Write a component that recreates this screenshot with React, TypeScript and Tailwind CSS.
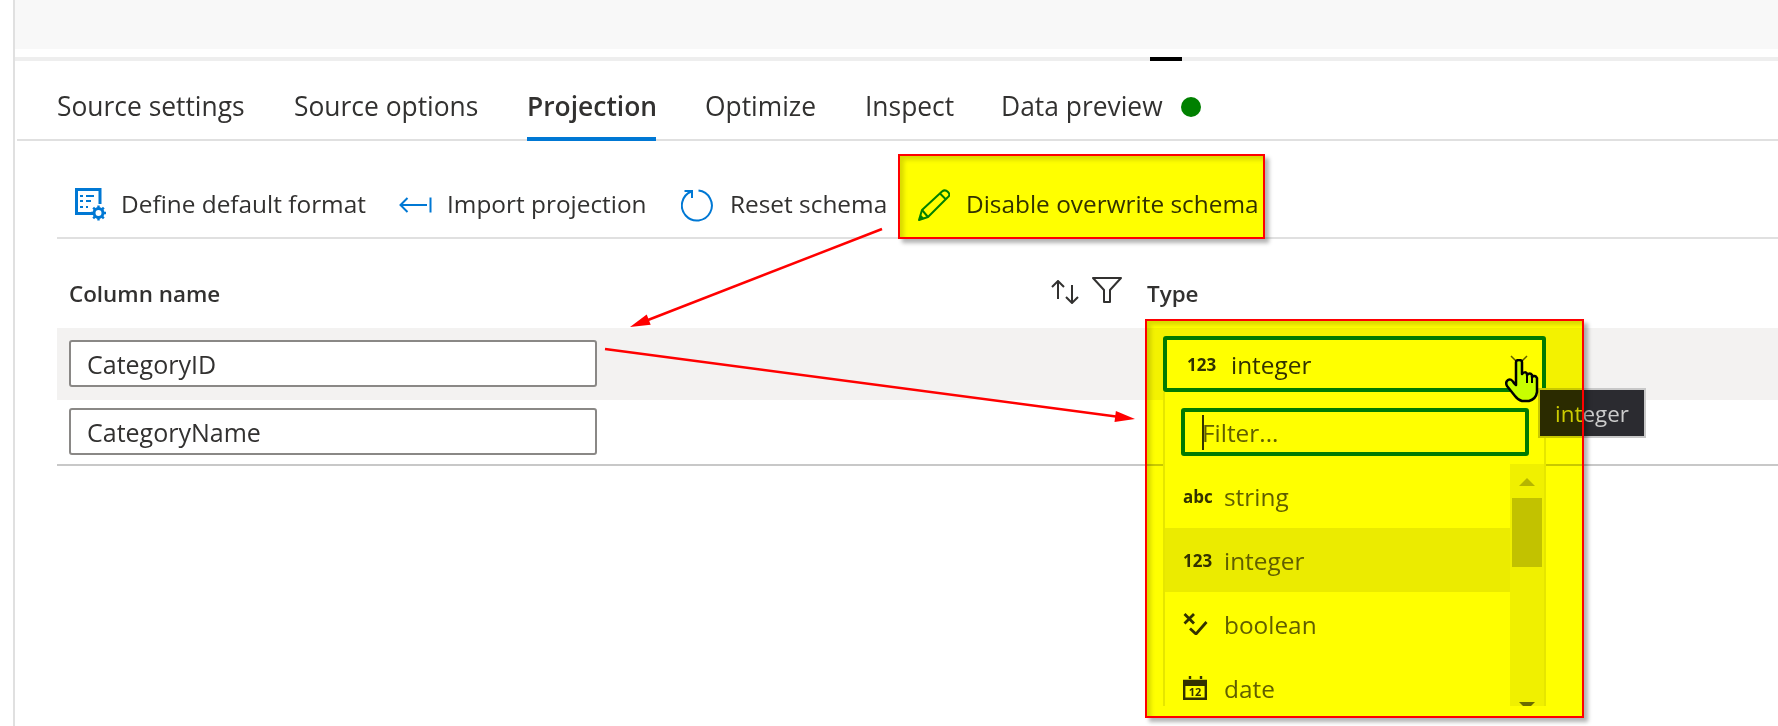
import React from 'react';

const DocGearIcon = () => (
  <svg width="32" height="34" viewBox="0 0 32 34" fill="none" className="shrink-0">
    <path d="M18 25.5H1.5V1.5H25V16" stroke="#0078d4" strokeWidth="3" />
    <path d="M5 8h3M11 8h8M5 13h3M11 13h5M5 19h3M11 19h2" stroke="#0078d4" strokeWidth="2" />
    <circle cx="23.5" cy="25" r="4.5" stroke="#0078d4" strokeWidth="3" />
    <path d="M23.5 17.5v3M23.5 29.5v3M16 25h3M28 25h3M18.2 19.7l2.1 2.1M26.7 28.2l2.1 2.1M18.2 30.3l2.1-2.1M26.7 21.8l2.1-2.1" stroke="#0078d4" strokeWidth="2.4" />
  </svg>
);

const ImportIcon = () => (
  <svg width="33" height="18" viewBox="0 0 33 18" fill="none" className="shrink-0">
    <path d="M1 9h27M8.500 2 1.500 9l7 7M31.500 1.500v15" stroke="#0078d4" strokeWidth="2" />
  </svg>
);

const ResetIcon = () => (
  <svg width="32" height="33" viewBox="0 0 32 33" fill="none" className="shrink-0">
    <path d="M17.500 1.600A15 15 0 1 1 10.500 2.500" stroke="#0078d4" strokeWidth="2" />
    <path d="M3.500 2H11V9" stroke="#0078d4" strokeWidth="2" />
  </svg>
);

const PencilIcon = () => (
  <svg width="32" height="32" viewBox="0 0 32 32" fill="none" className="shrink-0">
    <path d="M1 31 4 21 24 2.5Q27 0 30 3T29.500 8.500L10 28Z" stroke="#008000" strokeWidth="2" strokeLinejoin="round" />
    <path d="M4 21 10 28M22 4.500 28 10.500" stroke="#008000" strokeWidth="2" />
    <path d="M1 31 2.500 25.500 6.500 29.500Z" fill="#008000" />
  </svg>
);

const BooleanIcon = () => (
  <svg width="25" height="22" viewBox="0 0 25 22" fill="none" className="shrink-0">
    <path d="M1.500 1l9.500 9.500M11 1l-9.500 9.500" stroke="#323130" strokeWidth="2.800" />
    <path d="M7 15.500l6 5.500L23.500 9" stroke="#323130" strokeWidth="2.800" />
  </svg>
);

const DateIcon = () => (
  <svg width="24" height="24" viewBox="0 0 24 24" fill="none" className="shrink-0">
    <path d="M1.200 5h21.600v17.800H1.200z" stroke="#323130" strokeWidth="2.400" />
    <path d="M0 4h24v6H0z" fill="#323130" />
    <path d="M7 0v3M18 0v3" stroke="#323130" strokeWidth="2.400" />
    <text x="12" y="20" textAnchor="middle" fontSize="11" fontWeight="700" fill="#323130">12</text>
  </svg>
);

const HandCursor = () => (
  <svg width="34" height="44" viewBox="0 0 34 44" className="absolute left-[1505px] top-[359px]">
    <path
      d="M11 3Q11 1 14 1T17 3V15Q20 12 22 14.500V16Q25 13 27 16V18Q30 15.500 32 19V33Q31 40 24 42H17Q13 41 10 37L2 27Q0 23 3 21T9 24L11 26Z"
      fill="#c8ff00"
      stroke="#000"
      strokeWidth="2.500"
      strokeLinejoin="round"
    />
    <path d="M22 16v8M27 18v6" stroke="#000" strokeWidth="2" />
  </svg>
);

const Arrows = () => (
  <svg width="1778" height="726" viewBox="0 0 1778 726" fill="none" className="absolute left-0 top-0 pointer-events-none">
    <path d="M882 229 648 320" stroke="#f00" strokeWidth="2.500" />
    <path d="M630 327 650.700 324.800 646.700 314.600Z" fill="#f00" />
    <path d="M605 349 1116 416.500" stroke="#f00" strokeWidth="2.500" />
    <path d="M1135 419 1114.500 421.900 1115.900 410.900Z" fill="#f00" />
  </svg>
);

const tabs = [
  { label: 'Source settings', width: 'w-[188px]' },
  { label: 'Source options', width: 'w-[184px]' },
  { label: 'Projection', width: 'w-[129px]', active: true },
  { label: 'Optimize', width: 'w-[111px]' },
  { label: 'Inspect', width: 'w-[87px]' },
];

const ListRow: React.FC<{ icon: React.ReactNode; label: string; active?: boolean }> = ({ icon, label, active }) => (
  <div className={`h-16 shrink-0 flex items-center pl-[18px] ${active ? 'bg-[#ebebeb]' : ''}`}>
    <div className="w-[41px] flex">{icon}</div>
    <span className="mt-[2px] text-[#605e5c]">{label}</span>
  </div>
);

const TypeGlyph: React.FC<{ text: string }> = ({ text }) => (
  <span className="text-[17px] font-bold leading-none text-[#323130]">{text}</span>
);

export default function App() {
  return (
    <div className="relative w-[1778px] h-[726px] overflow-hidden bg-white text-[24.4px] text-[#323130] [font-family:'Open_Sans',sans-serif] pl-[13px]">
      <div className="h-full border-l-2 border-[#e0e0e0] flex flex-col">
        <div className="h-[49px] bg-[#f8f8f8]"></div>
        <div className="h-1 mt-2 bg-[#eeeeee]">
          <div className="h-1 w-8 ml-[1135px] bg-black"></div>
        </div>

        {/* Tabs */}
        <div className="h-[80px] ml-[2px] pl-[40px] border-b-2 border-[#e0e0e0] flex gap-[49px] text-[26.4px]">
          {tabs.map((t) => (
            <div key={t.label} className={`${t.width} h-[80px] shrink-0 pt-[26px] whitespace-nowrap ${t.active ? 'font-semibold border-b-4 border-[#0078d4]' : ''}`}>
              {t.label}
            </div>
          ))}
          <div className="h-[78px] pt-[26px] flex gap-[20px]">
            <span className="w-[160px] whitespace-nowrap">Data preview</span>
            <span className="w-5 h-5 mt-[10px] rounded-full bg-[#008000]"></span>
          </div>
        </div>

        {/* Toolbar */}
        <div className="ml-[42px] pl-[18px] pt-[32px] h-[98px] border-b-2 border-[#e0e0e0] flex items-center">
          <DocGearIcon />
          <span className="ml-[14px] w-[245px] -mt-[1px] whitespace-nowrap">Define default format</span>
          <span className="ml-[33px]"><ImportIcon /></span>
          <span className="ml-[15px] w-[200px] -mt-[1px] whitespace-nowrap">Import projection</span>
          <span className="ml-[34px]"><ResetIcon /></span>
          <span className="ml-[17px] w-[154px] -mt-[1px] whitespace-nowrap">Reset schema</span>
          <span className="ml-[34px]"><PencilIcon /></span>
          <span className="ml-[16px] -mt-[1px] whitespace-nowrap">Disable overwrite schema</span>
        </div>

        {/* Table */}
        <div className="ml-[42px]">
          <div className="h-[89px] pl-3 pt-[38px] flex items-start font-semibold text-[22.4px]">
            <span className="w-[982px]">Column name</span>
            <svg width="28" height="24" viewBox="0 0 28 24" fill="none" className="mt-[3px]">
              <path d="M7 19V1M1 7l6-6 6 6M21 5v18M15 17l6 6 6-6" stroke="#323130" strokeWidth="2" />
            </svg>
            <svg width="30" height="26" viewBox="0 0 30 26" fill="none" className="ml-[13px]">
              <path d="M1 1h28L18 13v12h-6V13Z" stroke="#323130" strokeWidth="2" strokeLinejoin="round" />
            </svg>
            <span className="ml-[25px]">Type</span>
          </div>
          <div className="h-[72px] bg-[#f3f2f1] pl-3 pt-3">
            <input readOnly value="CategoryID" className="w-[528px] h-[47px] bg-white border-2 border-[#8a8886] rounded-[3px] pl-4 text-[25px] outline-none" />
          </div>
          <div className="h-[66px] border-b-2 border-[#c8c8c8] pl-3 pt-2">
            <input readOnly value="CategoryName" className="w-[528px] h-[47px] bg-white border-2 border-[#8a8886] rounded-[3px] pl-4 text-[25px] outline-none" />
          </div>
        </div>
      </div>

      {/* Type dropdown, open */}
      <div className="absolute left-[1163px] top-[336px] w-[383px]">
        <div className="h-[56px] bg-white border-4 border-[#007a00] rounded-[3px] flex items-center pl-[20px] pr-[14px]">
          <span className="w-[44px] flex"><TypeGlyph text="123" /></span>
          <span className="mt-[2px]">integer</span>
          <svg width="18" height="10" viewBox="0 0 18 10" fill="none" className="ml-auto -mt-2">
            <path d="M1 1l8 8 8-8" stroke="#605e5c" strokeWidth="1.500" />
          </svg>
        </div>
        <div className="h-[314px] bg-white border-x-2 border-[#e6e6e6] overflow-hidden">
          <div className="h-[72px] pt-4 pl-4 pr-[15px]">
            <div className="h-[48px] border-4 border-[#007a00] rounded-[3px] flex items-center pl-[17px]">
              <span className="w-[2px] h-[35px] bg-[#323130]"></span>
              <span className="-ml-[2px] mt-[2px] text-[#605e5c]">Filter...</span>
            </div>
          </div>
          <div className="h-[242px] flex overflow-hidden">
            <div className="w-[345px] flex flex-col">
              <ListRow icon={<TypeGlyph text="abc" />} label="string" />
              <ListRow icon={<TypeGlyph text="123" />} label="integer" active />
              <ListRow icon={<BooleanIcon />} label="boolean" />
              <ListRow icon={<DateIcon />} label="date" />
            </div>
            <div className="w-[34px] bg-[#f0f0f0] flex flex-col items-center">
              <div className="mt-[14px] shrink-0 border-x-8 border-b-8 border-x-transparent border-b-[#b5b5b5]"></div>
              <div className="mt-3 h-[69px] w-[30px] shrink-0 bg-[#c2c2c2]"></div>
              <div className="mt-[135px] shrink-0 border-x-8 border-t-8 border-x-transparent border-t-[#6b6b6b]"></div>
            </div>
          </div>
        </div>
      </div>

      {/* Tooltip */}
      <div className="absolute left-[1538px] top-[388px] w-[108px] h-[50px] pt-[2px] bg-[#2b2b30] border-2 border-[#c8c8c8] text-[22.4px] text-[#cccccc] flex items-center justify-center">
        integer
      </div>

      {/* Yellow annotations, multiplied over the page */}
      <div className="absolute left-[898px] top-[154px] w-[367px] h-[85px] bg-[#ffff00] mix-blend-multiply"></div>
      <div className="absolute left-[898px] top-[154px] w-[367px] h-[85px] border-2 border-[#ff0000] shadow-[4px_4px_4px_rgba(0,0,0,0.3),inset_4px_4px_4px_rgba(0,0,0,0.15)]"></div>
      <div className="absolute left-[1145px] top-[319px] w-[439px] h-[399px] bg-[#ffff00] mix-blend-multiply"></div>
      <div className="absolute left-[1145px] top-[319px] w-[439px] h-[399px] border-2 border-[#ff0000] shadow-[4px_4px_4px_rgba(0,0,0,0.3),inset_4px_4px_4px_rgba(0,0,0,0.15)]"></div>

      <HandCursor />
      <Arrows />
    </div>
  );
}
